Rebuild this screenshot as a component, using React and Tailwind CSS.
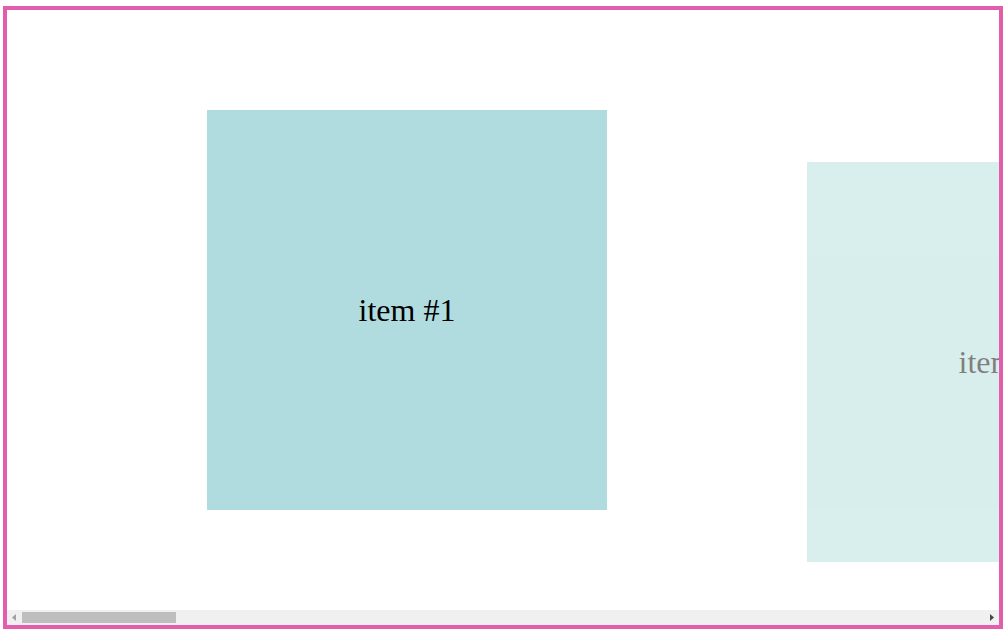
import { useRef, useState } from 'react';

const items = Array.from({ length: 10 }, (_, i) => i + 1);

function ArrowButton({ label, points, className, onClick }) {
  return (
    <button
      type="button"
      aria-label={label}
      onClick={onClick}
      className={`flex h-full w-[15px] shrink-0 items-center justify-center ${className}`}
    >
      <svg width="15" height="15" viewBox="0 0 15 15" fill="currentColor" aria-hidden="true">
        <polygon points={points} />
      </svg>
    </button>
  );
}

export default function App() {
  const scroller = useRef(null);
  const [progress, setProgress] = useState(0);

  const handleScroll = () => {
    const el = scroller.current;
    setProgress((el.scrollLeft / (el.scrollWidth - el.clientWidth)) * 100);
  };

  const scrollToProgress = (value) => {
    const el = scroller.current;
    el.scrollLeft = (value / 100) * (el.scrollWidth - el.clientWidth);
  };

  return (
    <main className="pt-1.5 pr-[5px] pl-[3px]">
      <section className="border-4 border-[#e25ead] bg-white">
        <div
          ref={scroller}
          onScroll={handleScroll}
          className="overflow-x-auto overflow-y-hidden [scrollbar-width:none]"
        >
          <ul className="flex h-[600px] w-max items-start gap-[200px] px-[200px] pt-[100px]">
            {items.map((n) => (
              <li
                key={n}
                className={`flex size-[400px] shrink-0 items-center justify-center font-['Liberation_Serif',serif] text-[32px] leading-9 text-black ${
                  n === 1 ? 'bg-[#b0dce0]' : 'mt-[52px] bg-[#b2dfdd] opacity-50'
                }`}
              >
                item #{n}
              </li>
            ))}
          </ul>
        </div>

        <div className="flex h-[15px] items-center bg-[#f0f0f0]">
          <ArrowButton
            label="Scroll left"
            points="9,4 9,11 5,7.5"
            className="text-[#a0a0a0]"
            onClick={() => scroller.current.scrollBy({ left: -40 })}
          />
          <input
            type="range"
            aria-label="Scroll position"
            min="0"
            max="100"
            step="any"
            value={progress}
            onChange={(e) => scrollToProgress(Number(e.target.value))}
            className="h-[11px] min-w-0 flex-1 appearance-none bg-transparent outline-none [&::-webkit-slider-thumb]:h-[11px] [&::-webkit-slider-thumb]:w-[154px] [&::-webkit-slider-thumb]:appearance-none [&::-webkit-slider-thumb]:bg-[#bebebe]"
          />
          <ArrowButton
            label="Scroll right"
            points="6,4 6,11 10,7.5"
            className="text-[#484848]"
            onClick={() => scroller.current.scrollBy({ left: 40 })}
          />
        </div>
      </section>
    </main>
  );
}
